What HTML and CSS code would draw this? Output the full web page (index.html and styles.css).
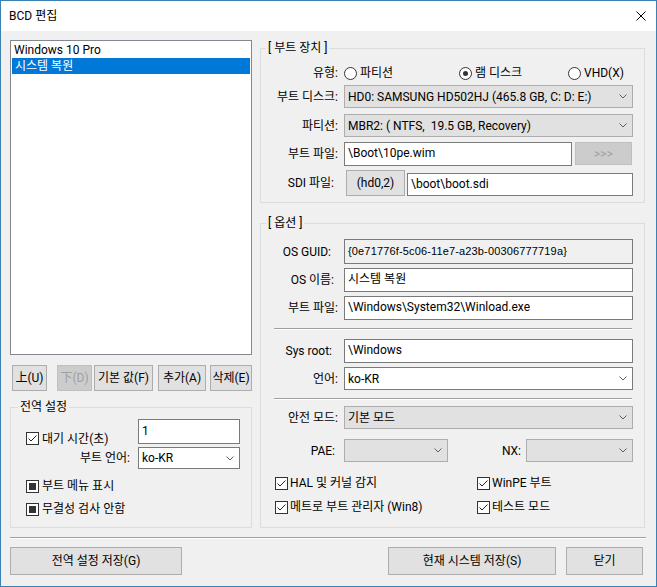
FILE: index.html
```html
<!DOCTYPE html>
<html lang="ko">
<head>
<meta charset="utf-8">
<title>BCD 편집</title>
<link rel="stylesheet" href="styles.css">
</head>
<body>
<div class="window">
  <div class="titlebar">
    <span class="title">BCD 편집</span>
    <span class="close"><svg width="10" height="10" viewBox="0 0 10 10"><path d="M0.5 0.5L9.5 9.5M9.5 0.5L0.5 9.5" stroke="#000" stroke-width="1" fill="none"/></svg></span>
  </div>

  <div class="main">
    <div class="leftcol">
      <div class="listbox">
        <div class="item">Windows 10 Pro</div>
        <div class="item sel">시스템 복원</div>
      </div>
      <div class="btnrow">
        <div class="btn b-up">上(U)</div>
        <div class="btn b-down disabled">下(D)</div>
        <div class="btn b-def">기본 값(F)</div>
        <div class="btn b-add">추가(A)</div>
        <div class="btn b-del">삭제(E)</div>
      </div>
      <fieldset class="group g-global">
        <legend>전역 설정</legend>
        <div class="g-row1">
          <div class="chkcell"><span class="chk"><svg width="11" height="11" viewBox="0 0 11 11"><path d="M1.5 5.5L4 8L9.5 2.5" fill="none" stroke="#222"/></svg></span><span>대기 시간(초)</span></div>
          <div class="edit e-timeout">1</div>
        </div>
        <div class="g-row2">
          <div class="g-lbl">부트 언어:</div>
          <div class="combo white c-lang1"><span>ko-KR</span><svg class="chev" width="8" height="5" viewBox="0 0 8 5"><path d="M0.5 0.5L4 4L7.5 0.5" fill="none" stroke="#606060"/></svg></div>
        </div>
        <div class="chkrow g-r3"><span class="chk ind"></span><span>부트 메뉴 표시</span></div>
        <div class="chkrow g-r4"><span class="chk ind"></span><span>무결성 검사 안함</span></div>
      </fieldset>
    </div>

    <div class="rightcol">
      <fieldset class="group g-boot">
        <legend>[ 부트 장치 ]</legend>
        <div class="frow r-type">
          <div class="lbl">유형:</div>
          <div class="radioitem ri-1"><span class="radio"></span><span>파티션</span></div>
          <div class="radioitem ri-2"><span class="radio on"></span><span>램 디스크</span></div>
          <div class="radioitem"><span class="radio"></span><span>VHD(X)</span></div>
        </div>
        <div class="frow r-disk">
          <div class="lbl">부트 디스크:</div>
          <div class="combo gray w-full"><span>HD0: SAMSUNG HD502HJ (465.8 GB, C: D: E:)</span><svg class="chev" width="8" height="5" viewBox="0 0 8 5"><path d="M0.5 0.5L4 4L7.5 0.5" fill="none" stroke="#606060"/></svg></div>
        </div>
        <div class="frow r-part">
          <div class="lbl">파티션:</div>
          <div class="combo gray w-full"><span>MBR2: ( NTFS,&nbsp; 19.5 GB, Recovery)</span><svg class="chev" width="8" height="5" viewBox="0 0 8 5"><path d="M0.5 0.5L4 4L7.5 0.5" fill="none" stroke="#606060"/></svg></div>
        </div>
        <div class="frow r-bfile">
          <div class="lbl">부트 파일:</div>
          <div class="edit e-bootfile">\Boot\10pe.wim</div>
          <div class="btn disabled b-more">&gt;&gt;&gt;</div>
        </div>
        <div class="frow r-sdi">
          <div class="lbl lbl-sdi">SDI 파일:</div>
          <div class="btn b-hd">(hd0,2)</div>
          <div class="edit e-sdi">\boot\boot.sdi</div>
        </div>
      </fieldset>

      <fieldset class="group g-opt">
        <legend>[ 옵션 ]</legend>
        <div class="frow r-guid">
          <div class="lbl pr7">OS GUID:</div>
          <div class="edit readonly w-full guid">{0e71776f-5c06-11e7-a23b-00306777719a}</div>
        </div>
        <div class="frow r-osname">
          <div class="lbl pr4">OS 이름:</div>
          <div class="edit w-full">시스템 복원</div>
        </div>
        <div class="frow r-osfile">
          <div class="lbl">부트 파일:</div>
          <div class="edit w-full">\Windows\System32\Winload.exe</div>
        </div>
        <div class="sep inner-sep s1"></div>
        <div class="frow r-sysroot">
          <div class="lbl pr6">Sys root:</div>
          <div class="edit w-full">\Windows</div>
        </div>
        <div class="frow r-lang">
          <div class="lbl">언어:</div>
          <div class="combo white w-full"><span>ko-KR</span><svg class="chev" width="8" height="5" viewBox="0 0 8 5"><path d="M0.5 0.5L4 4L7.5 0.5" fill="none" stroke="#606060"/></svg></div>
        </div>
        <div class="sep inner-sep s2"></div>
        <div class="frow r-safe">
          <div class="lbl">안전 모드:</div>
          <div class="combo gray w-full"><span>기본 모드</span><svg class="chev" width="8" height="5" viewBox="0 0 8 5"><path d="M0.5 0.5L4 4L7.5 0.5" fill="none" stroke="#606060"/></svg></div>
        </div>
        <div class="frow r-pae">
          <div class="lbl pr3">PAE:</div>
          <div class="combo gray c-pae"><span></span><svg class="chev" width="8" height="5" viewBox="0 0 8 5"><path d="M0.5 0.5L4 4L7.5 0.5" fill="none" stroke="#606060"/></svg></div>
          <div class="lbl-nx">NX:</div>
          <div class="combo gray c-nx"><span></span><svg class="chev" width="8" height="5" viewBox="0 0 8 5"><path d="M0.5 0.5L4 4L7.5 0.5" fill="none" stroke="#606060"/></svg></div>
        </div>
        <div class="chkgrid r-chk1">
          <div class="chkitem ci-1"><span class="chk"><svg width="11" height="11" viewBox="0 0 11 11"><path d="M1.5 5.5L4 8L9.5 2.5" fill="none" stroke="#222"/></svg></span><span>HAL 및 커널 감지</span></div>
          <div class="chkitem"><span class="chk"><svg width="11" height="11" viewBox="0 0 11 11"><path d="M1.5 5.5L4 8L9.5 2.5" fill="none" stroke="#222"/></svg></span><span>WinPE 부트</span></div>
        </div>
        <div class="chkgrid r-chk2">
          <div class="chkitem ci-1"><span class="chk"><svg width="11" height="11" viewBox="0 0 11 11"><path d="M1.5 5.5L4 8L9.5 2.5" fill="none" stroke="#222"/></svg></span><span>메트로 부트 관리자 (Win8)</span></div>
          <div class="chkitem"><span class="chk"><svg width="11" height="11" viewBox="0 0 11 11"><path d="M1.5 5.5L4 8L9.5 2.5" fill="none" stroke="#222"/></svg></span><span>테스트 모드</span></div>
        </div>
      </fieldset>
    </div>
  </div>

  <div class="sep footer-sep"></div>
  <div class="footer">
    <div class="btn f-1">전역 설정 저장(G)</div>
    <div class="btn f-2">현재 시스템 저장(S)</div>
    <div class="btn f-3">닫기</div>
  </div>
</div>
</body>
</html>
```

FILE: styles.css
```css
* { box-sizing: border-box; }
html, body { margin: 0; padding: 0; }
body {
  font-family: Roboto, "Noto Sans CJK KR", sans-serif;
  font-size: 12px;
  line-height: 16px;
  color: #000;
  background: #f0f0f0;
}
.window {
  width: 657px;
  height: 587px;
  border: 1px solid #3b81b3;
  background: #f0f0f0;
  overflow: hidden;
}
.titlebar {
  height: 30px;
  background: #fff;
  display: flex;
  align-items: center;
  justify-content: space-between;
  padding: 0 10px 0 8px;
}
.title { font-size: 12px; }
.close { display: flex; width: 10px; height: 10px; }

.main {
  display: flex;
  padding-left: 9px;
  height: 497px;
}
.leftcol { width: 242px; }
.rightcol { width: 385px; margin-left: 8px; }

.listbox {
  margin-top: 9px;
  height: 315px;
  background: #fff;
  border: 1px solid #828790;
  padding: 1px 1px 0 1px;
}
.item { height: 16px; line-height: 16px; padding-left: 3px; white-space: nowrap; }
.item:first-child { margin-left: -1px; }
.item.sel { background: #0078d7; color: #fff; }

.btn {
  display: flex;
  align-items: center;
  justify-content: center;
  background: #e1e1e1;
  border: 1px solid #adadad;
  white-space: nowrap;
}
.btn.disabled { background: #cccccc; border-color: #bfbfbf; color: #a0a0a0; }

.btnrow { display: flex; margin-top: 10px; height: 26px; }
.b-up { width: 35px; margin-left: 2px; }
.b-down { width: 35px; margin-left: 10px; }
.b-def { width: 59px; margin-left: 2px; }
.b-add { width: 48px; margin-left: 5px; }
.b-del { width: 42px; margin-left: 4px; }

fieldset.group {
  margin: 0;
  padding: 0;
  border: 1px solid #dcdcdc;
  min-width: 0;
}
fieldset.group legend {
  padding: 0 2px;
  height: 16px;
  line-height: 16px;
  white-space: nowrap;
}
.g-global { margin-top: 8px !important; height: 129px; }
.g-global legend { margin-left: 7px; }
.g-boot { margin-top: 9px !important; height: 163px; }
.g-opt { margin-top: 12px !important; height: 313px; }
.g-boot legend, .g-opt legend { margin-left: 5px; }

/* global settings */
.g-row1 { display: flex; margin-top: 4px; height: 25px; }
.chkcell { width: 127px; padding-left: 15px; padding-top: 12px; display: flex; align-items: flex-start; }
.chkcell > span:last-child { line-height: 16px; }
.chkcell .chk { margin-top: 1px; }
.e-timeout { width: 102px; height: 25px; }
.g-row2 { display: flex; align-items: center; margin-top: 3px; height: 22px; }
.g-lbl { width: 119px; text-align: right; margin-right: 8px; white-space: nowrap; }
.c-lang1 { width: 102px; height: 22px; }
.chkrow { display: flex; align-items: center; height: 16px; padding-left: 15px; }
.g-r3 { margin-top: 9px; }
.g-r4 { margin-top: 7px; }

.chk {
  width: 13px;
  height: 13px;
  border: 1px solid #333;
  background: #fff;
  margin-right: 3px;
  flex: none;
  display: flex;
}
.chk.ind { padding: 2px; }
.chk.ind::after { content: ""; flex: 1; background: #333; }

.radio {
  width: 13px;
  height: 13px;
  border: 1px solid #333;
  border-radius: 50%;
  background: #fff;
  margin-right: 3px;
  flex: none;
  display: flex;
  align-items: center;
  justify-content: center;
}
.radio.on::after { content: ""; width: 5px; height: 5px; border-radius: 50%; background: #333; }

/* right rows */
.frow { display: flex; align-items: center; }
.lbl { width: 77px; margin-right: 6px; text-align: right; white-space: nowrap; flex: none; }
.pr3 { padding-right: 3px; }
.pr4 { padding-right: 4px; }
.pr6 { padding-right: 6px; }
.pr7 { padding-right: 7px; }

.combo {
  display: flex;
  align-items: center;
  justify-content: space-between;
  border: 1px solid #adadad;
  padding: 0 5px 0 3px;
  white-space: nowrap;
  flex: none;
}
.combo.gray { background: #e1e1e1; }
.combo.white { background: #fff; border-color: #7a7a7a; }
.chev { flex: none; }

.edit {
  display: flex;
  align-items: center;
  background: #fff;
  border: 1px solid #7a7a7a;
  padding: 0 0 2px 3px;
  white-space: nowrap;
  flex: none;
  overflow: hidden;
}
.edit.readonly { background: #f0f0f0; }
.guid { font-family: "Liberation Sans", Arial, sans-serif; font-size: 11px; letter-spacing: 0.15px; }
.w-full { width: 289px; }

.r-type { margin-top: 9px; height: 16px; }
.radioitem { display: flex; align-items: center; }
.ri-1 { width: 115px; }
.ri-2 { width: 109px; }
.r-disk { margin-top: 4px; }
.r-disk .combo, .r-part .combo { height: 23px; }
.r-part { margin-top: 6px; }
.r-bfile { margin-top: 5px; height: 24px; }
.e-bootfile { width: 228px; height: 24px; }
.b-more { width: 57px; height: 23px; margin-left: 3px; align-self: flex-start; }
.r-sdi { margin-top: 4px; height: 26px; }
.lbl-sdi { width: 73px; margin-right: 12px; }
.b-hd { width: 59px; height: 26px; }
.e-sdi { width: 226px; height: 23px; margin-left: 2px; align-self: flex-end; }

.r-guid { margin-top: 8px; }
.r-guid .edit { height: 25px; }
.r-osname { margin-top: 4px; }
.r-osname .edit, .r-osfile .edit, .r-sysroot .edit { height: 24px; }
.r-osfile { margin-top: 4px; }
.sep { border-top: 1px solid #a0a0a0; border-bottom: 1px solid #fff; height: 2px; }
.inner-sep { margin-left: 13px; width: 358px; }
.s1 { margin-top: 8px; }
.r-sysroot { margin-top: 9px; }
.r-lang { margin-top: 4px; }
.r-lang .combo { height: 23px; }
.s2 { margin-top: 8px; }
.r-safe { margin-top: 6px; }
.r-safe .combo { height: 23px; }
.r-pae { margin-top: 10px; }
.c-pae { width: 104px; height: 23px; }
.lbl-nx { width: 73px; text-align: right; margin-right: 5px; white-space: nowrap; }
.c-nx { width: 107px; height: 23px; }
.chkgrid { display: flex; height: 16px; padding-left: 14px; }
.chkitem { display: flex; align-items: center; white-space: nowrap; }
.chkitem .chk { margin-right: 2px; }
.ci-1 { width: 202px; }
.r-chk1 { margin-top: 13px; }
.r-chk2 { margin-top: 8px; }

.footer-sep { margin: 9px 10px 0 9px; }
.footer { display: flex; height: 28px; margin-top: 8px; padding-left: 9px; }
.f-1 { width: 172px; }
.f-2 { width: 168px; margin-left: 206px; }
.f-3 { width: 77px; margin-left: 10px; }
```
